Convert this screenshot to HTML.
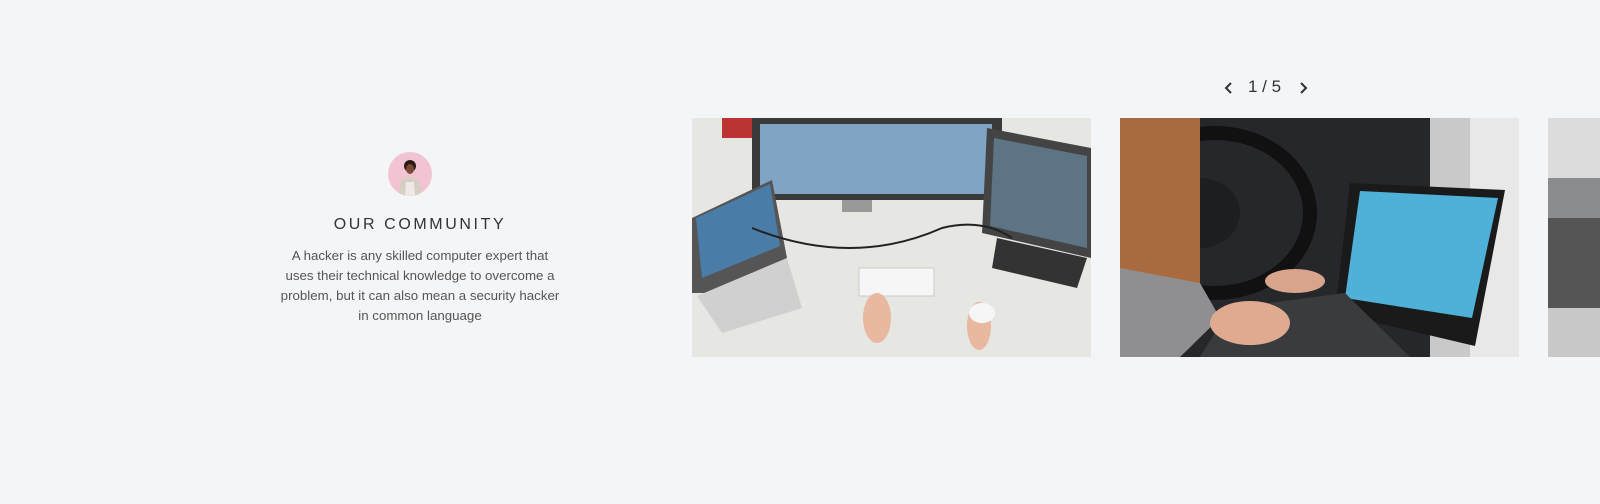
<!DOCTYPE html>
<html><head><meta charset="utf-8"><style>
html,body{margin:0;padding:0;width:1600px;height:504px;background:#f4f5f7;overflow:hidden;font-family:"Liberation Sans",Arial,sans-serif}
.av{position:absolute;left:388px;top:152px;width:44px;height:44px;border-radius:50%;background:#f2c4d3;overflow:hidden}
h2{position:absolute;left:260px;width:320px;top:216px;margin:0;text-align:center;font-size:16px;font-weight:500;letter-spacing:2.6px;color:#333;}
p{position:absolute;left:240px;width:360px;top:246px;margin:0;text-align:center;font-size:13.3px;line-height:20px;color:#555;white-space:nowrap}
.pg{position:absolute;left:1222px;top:77px;width:90px;font-size:17px;color:#333;}
.img{position:absolute;top:118px;height:239px;overflow:hidden}
</style></head><body>
<div class="av"><svg width="44" height="44"><circle cx="22" cy="14" r="6" fill="#2a1a14"/><ellipse cx="22" cy="17" rx="4" ry="5" fill="#7a4a32"/><path d="M10 44 L13 28 Q22 23 31 28 L34 44Z" fill="#d8cfc4"/><path d="M18 30 L26 30 L27 44 L17 44Z" fill="#f0e8e8"/></svg></div>
<h2>OUR COMMUNITY</h2>
<p>A hacker is any skilled computer expert that<br>uses their technical knowledge to overcome a<br>problem, but it can also mean a security hacker<br>in common language</p>
<div class="pg"><svg width="14" height="14" style="position:absolute;left:0;top:4px"><path d="M9 2 L4 7 L9 12" stroke="#333" stroke-width="2" fill="none"/></svg><span style="position:absolute;left:26px;top:0">1 / 5</span><svg width="14" height="14" style="position:absolute;left:74px;top:4px"><path d="M5 2 L10 7 L5 12" stroke="#333" stroke-width="2" fill="none"/></svg></div>
<div class="img" style="left:692px;width:399px;background:#e6e6e3">
<svg width="399" height="239">
<rect x="30" y="0" width="30" height="20" fill="#b33"/>
<rect x="60" y="0" width="250" height="82" fill="#3a3a3a"/><rect x="68" y="6" width="232" height="70" fill="#7fa4c4"/>
<rect x="150" y="82" width="30" height="12" fill="#999"/>
<path d="M295 10 L399 30 L399 140 L290 115Z" fill="#444"/><path d="M302 20 L395 38 L395 130 L298 108Z" fill="#5d7484"/>
<path d="M0 100 L80 62 L95 140 L20 175 L0 175Z" fill="#555"/><path d="M4 100 L78 66 L88 128 L10 160Z" fill="#4a7ca8"/>
<path d="M5 178 L95 140 L110 190 L30 215Z" fill="#d0d0d0"/>
<rect x="167" y="150" width="75" height="28" fill="#f6f6f6" stroke="#ccc"/>
<path d="M305 120 L395 140 L385 170 L300 150Z" fill="#333"/>
<ellipse cx="185" cy="200" rx="14" ry="25" fill="#e8b8a0"/><ellipse cx="287" cy="208" rx="12" ry="24" fill="#e8b8a0"/>
<ellipse cx="290" cy="195" rx="13" ry="10" fill="#f6f6f6"/>
<path d="M60 110 Q160 150 250 110 Q290 100 320 120" stroke="#222" stroke-width="2" fill="none"/>
</svg></div>
<div class="img" style="left:1120px;width:399px;background:#2a2a2c">
<svg width="399" height="239">
<rect x="0" y="0" width="399" height="239" fill="#26272a"/>
<rect x="310" y="0" width="89" height="239" fill="#c9c9c9"/><rect x="350" y="0" width="49" height="239" fill="#e8e8e8"/>
<ellipse cx="95" cy="95" rx="95" ry="80" stroke="#111" stroke-width="14" fill="none"/>
<ellipse cx="80" cy="95" rx="40" ry="35" fill="#1c1e22"/>
<rect x="0" y="0" width="80" height="200" fill="#a86a3e"/>
<path d="M0 150 L80 165 L100 200 L60 239 L0 239Z" fill="#8f8f92"/>
<path d="M230 65 L385 72 L355 228 L215 195Z" fill="#1a1a1a"/><path d="M240 73 L378 80 L352 200 L225 180Z" fill="#4fb0d8"/>
<path d="M110 190 L225 175 L290 239 L80 239Z" fill="#3a3b3e"/>
<ellipse cx="175" cy="163" rx="30" ry="12" fill="#d9a48c"/><ellipse cx="130" cy="205" rx="40" ry="22" fill="#e0aa90"/>
</svg></div>
<div class="img" style="left:1548px;width:52px;background:#8a8c8e">
<svg width="52" height="239"><rect width="52" height="60" fill="#dcdcdc"/><rect y="100" width="52" height="90" fill="#555"/><rect y="190" width="52" height="49" fill="#c8c8c8"/></svg></div>
</body></html>
